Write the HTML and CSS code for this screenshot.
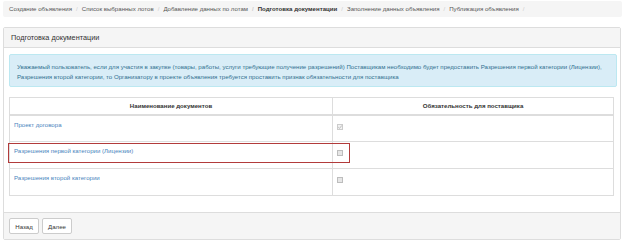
FILE: index.html
```html
<!DOCTYPE html>
<html lang="ru">
<head>
<meta charset="utf-8">
<link rel="stylesheet" href="styles.css">
</head>
<body>
<div class="page">
  <ol class="breadcrumb">
    <li>Создание объявления</li>
    <li>Список выбранных лотов</li>
    <li>Добавление данных по лотам</li>
    <li class="active">Подготовка документации</li>
    <li>Заполнение данных объявления</li>
    <li>Публикация объявления</li>
    <li class="empty"></li>
  </ol>
  <div class="panel">
    <div class="panel-heading">Подготовка документации</div>
    <div class="panel-body">
      <div class="alert">Уважаемый пользователь, если для участия в закупке (товары, работы, услуги требующие получение разрешений) Поставщикам необходимо будет предоставить Разрешения первой категории (Лицензии), Разрешения второй категории, то Организатору в проекте объявления требуется проставить признак обязательности для поставщика</div>
      <div class="table-wrap">
        <table class="docs">
          <thead>
            <tr><th class="c1">Наименование документов</th><th>Обязательность для поставщика</th></tr>
          </thead>
          <tbody>
            <tr><td><a>Проект договора</a></td><td><span class="cb checked"><svg viewBox="0 0 6 6" width="6" height="6"><path d="M1.2 3.1 L2.5 4.4 L4.9 1.4" fill="none" stroke="#b9b9b9" stroke-width="0.9"/></svg></span></td></tr>
            <tr><td><a>Разрешения первой категории (Лицензии)</a></td><td><span class="cb"></span></td></tr>
            <tr><td><a>Разрешения второй категории</a></td><td><span class="cb"></span></td></tr>
          </tbody>
        </table>
        <div class="highlight"></div>
      </div>
    </div>
    <div class="panel-footer">
      <button class="btn">Назад</button>
      <button class="btn">Далее</button>
    </div>
  </div>
</div>
</body>
</html>
```
FILE: styles.css
```css
* { box-sizing: border-box; }
html, body { margin: 0; padding: 0; background: #fff; }
body {
  font-family: "Liberation Sans", Arial, sans-serif;
  font-size: 6.1px;
  color: #333;
}
.page { padding: 1px 2px 0 3px; }
.breadcrumb {
  list-style: none;
  margin: 0;
  height: 16px;
  line-height: 16px;
  padding: 0 6px;
  background: #f5f5f5;
  border-radius: 2px;
  display: flex;
  color: #555;
}
.breadcrumb li + li::before {
  content: "/";
  color: #ccc;
  padding: 0 4px;
}
.breadcrumb .active { font-weight: bold; color: #333; }
.panel {
  margin-top: 10px;
  border: 1px solid #ddd;
  border-radius: 2px;
  margin-right: 1px;
}
.panel-heading {
  height: 20px;
  line-height: 20px;
  background: #f5f5f5;
  border-bottom: 1px solid #ddd;
  padding-left: 7px;
  font-size: 7.3px;
  color: #333;
}
.panel-body { padding: 6px 3px 16px 5px; }
.alert {
  background: #d9edf7;
  border: 1px solid #bce8f1;
  color: #31708f;
  border-radius: 2px;
  padding: 7px 7px 5px 7px;
  line-height: 10px;
  height: 33px;
}
.table-wrap {
  position: relative;
  margin-top: 10px;
  margin-right: 3px;
}
.docs {
  width: 100%;
  border-collapse: collapse;
  border: 1px solid #ddd;
}
.docs th {
  height: 17px;
  font-weight: bold;
  text-align: center;
  border: 1px solid #ddd;
  border-bottom-width: 2px;
  padding: 0;
  color: #333;
}
.docs th.c1 { width: 323px; }
.docs td {
  border: 1px solid #ddd;
  height: 27px;
  vertical-align: top;
  padding: 4px 3px 0 4px;
  line-height: 10px;
}
.docs a { color: #4a85bd; }
.cb {
  display: inline-block;
  width: 6px;
  height: 6px;
  margin-top: 4px;
  background: #e6e6e6;
  border: 1px solid #bdbdbd;
  vertical-align: top;
}
.cb.checked { background: #f2f2f2; border-color: #ccc; }
.cb svg { display: block; margin: -1px; }
.highlight {
  position: absolute;
  left: -1px;
  top: 46px;
  width: 342px;
  height: 20px;
  border: 1.5px solid #b23b3b;
  pointer-events: none;
}
.panel-footer {
  background: #f5f5f5;
  border-top: 1px solid #ddd;
  height: 27px;
  padding: 5px 5px;
  display: flex;
  gap: 3px;
  align-items: flex-start;
}
.btn {
  font-family: inherit;
  font-size: 6.1px;
  color: #333;
  background: #fff;
  border: 1px solid #ccc;
  border-radius: 2px;
  height: 16px;
  width: 30px;
  padding: 0;
}
```
